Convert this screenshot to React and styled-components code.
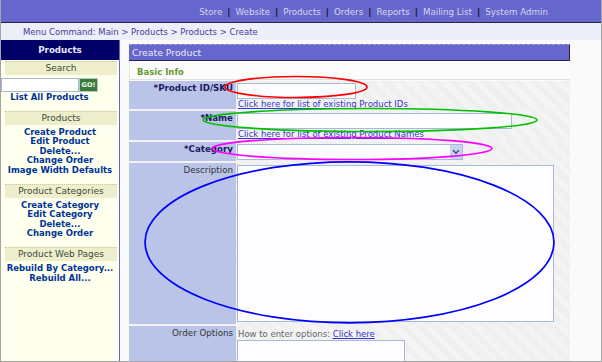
import React from 'react';
import styled, { createGlobalStyle } from 'styled-components';

const GlobalStyle = createGlobalStyle`
  html, body {
    margin: 0;
    padding: 0;
    background: #fafafa;
  }
  body {
    font-family: "DejaVu Sans", Verdana, sans-serif;
  }
`;

const navItems = ['Store', 'Website', 'Products', 'Orders', 'Reports', 'Mailing List', 'System Admin'];

const sections = [
  { title: 'Products', links: ['Create Product', 'Edit Product', 'Delete...', 'Change Order', 'Image Width Defaults'] },
  { title: 'Product Categories', links: ['Create Category', 'Edit Category', 'Delete...', 'Change Order'] },
  { title: 'Product Web Pages', links: ['Rebuild By Category...', 'Rebuild All...'] },
];

function App() {
  return (
    <Screen>
      <GlobalStyle />
      <Frame>
        <TopBar>
          {navItems.map((item, i) => (
            <React.Fragment key={item}>
              {i > 0 && <Sep>|</Sep>}
              <NavLink>{item}</NavLink>
            </React.Fragment>
          ))}
        </TopBar>
        <Crumbs>Menu Command: Main &gt; Products &gt; Products &gt; Create</Crumbs>
        <Body>
          <Sidebar>
            <SideTitle>Products</SideTitle>
            <SectionHead $first>Search</SectionHead>
            <SearchForm>
              <SearchRow>
                <SearchInput type="text" />
                <GoButton>GO!</GoButton>
              </SearchRow>
              <SideLink href="#">List All Products</SideLink>
            </SearchForm>
            {sections.map((s) => (
              <React.Fragment key={s.title}>
                <SectionHead>{s.title}</SectionHead>
                <LinkList>
                  {s.links.map((l, i) => (
                    <SideLink key={i} href="#">{l}</SideLink>
                  ))}
                </LinkList>
              </React.Fragment>
            ))}
          </Sidebar>
          <Main>
            <MainHead>Create Product</MainHead>
            <GroupRow>Basic Info</GroupRow>
            <FormGrid>
              <Label $req>*Product ID/SKU</Label>
              <Value>
                <TextInput $w={119} />
                <HelpLink href="#">Click here for list of existing Product IDs</HelpLink>
              </Value>
              <Label $req>*Name</Label>
              <Value>
                <TextInput $w={275} />
                <HelpLink href="#">Click here for list of existing Product Names</HelpLink>
              </Value>
              <Label $req>*Category</Label>
              <Value>
                <SelectBox>
                  <SelectArrow>
                    <svg width="8" height="6" viewBox="0 0 8 6">
                      <path d="M1 1.2 L4 4.2 L7 1.2" fill="none" stroke="#3e4f78" strokeWidth="1.6" />
                    </svg>
                  </SelectArrow>
                </SelectBox>
              </Value>
              <Label>Description</Label>
              <Value>
                <Area $w={317} $h={157} />
              </Value>
              <Label>Order Options</Label>
              <Value>
                <Hint>
                  How to enter options: <InlineLink href="#">Click here</InlineLink>
                </Hint>
                <Area $w={168} $h={40} />
              </Value>
            </FormGrid>
          </Main>
        </Body>
      </Frame>
      <Markup width="602" height="362" viewBox="0 0 602 362">
        <ellipse cx="296" cy="87" rx="71" ry="10.5" stroke="#ff0000" />
        <ellipse cx="370" cy="120" rx="167" ry="11.5" stroke="#00c000" />
        <ellipse cx="352" cy="148.5" rx="140" ry="11" stroke="#ff00ff" />
        <ellipse cx="349.5" cy="242.3" rx="204.5" ry="80.5" stroke="#0000ff" />
      </Markup>
    </Screen>
  );
}

export default App;

const Screen = styled.div`
  position: relative;
  width: 602px;
  height: 362px;
  overflow: hidden;
`;

const Frame = styled.div`
  width: 100%;
  height: 100%;
  box-sizing: border-box;
  border: 1px solid #a4a4a4;
  border-top: none;
  background: #fafafa;
  display: flex;
  flex-direction: column;
`;

const TopBar = styled.div`
  height: 22px;
  flex: none;
  background: #6666cc;
  border-bottom: 1px solid #26264a;
  display: flex;
  align-items: center;
  justify-content: flex-end;
  padding: 2px 53px 0 0;
  box-sizing: border-box;
  height: 23px;
  font-size: 8.7px;
  color: #d6d6f0;
`;

const NavLink = styled.span`
  white-space: nowrap;
`;

const Sep = styled.span`
  font-weight: bold;
  color: #10102a;
  padding: 0 5px;
`;

const Crumbs = styled.div`
  height: 17px;
  flex: none;
  box-sizing: border-box;
  background: #eceef8;
  padding: 2px 0 0 22px;
  font-size: 8.5px;
  line-height: 15px;
  color: #4a3c9c;
`;

const Body = styled.div`
  flex: 1;
  min-height: 0;
  display: flex;
  overflow: hidden;
`;

const Sidebar = styled.div`
  width: 118px;
  flex: none;
  background: #ffffee;
  border-right: 1px solid #6666cc;
  display: flex;
  flex-direction: column;
  & > * {
    flex: none;
  }
`;

const SideTitle = styled.div`
  height: 20px;
  background: #000066;
  color: #e8e8ff;
  font-weight: bold;
  font-size: 8.7px;
  line-height: 20px;
  text-align: center;
`;

const SectionHead = styled.div`
  margin: ${(p) => (p.$first ? '1px' : '8px')} 2px 0 4px;
  height: 14px;
  box-sizing: border-box;
  border-top: 1px dotted #c8c890;
  background: #eeeecc;
  color: #3b4b3b;
  font-size: 9px;
  line-height: 13px;
  text-align: center;
`;

const SearchForm = styled.div`
  width: 97px;
  margin-top: 3px;
  display: flex;
  flex-direction: column;
  text-align: center;
`;

const SearchRow = styled.div`
  display: flex;
  height: 14px;
  margin-bottom: 1px;
`;

const SearchInput = styled.input`
  width: 78px;
  height: 14px;
  box-sizing: border-box;
  border: 1px solid #a6b8d6;
  background: #fff;
  padding: 0;
  margin: 0;
  outline: none;
`;

const GoButton = styled.button`
  width: 19px;
  height: 14px;
  box-sizing: border-box;
  margin: 0;
  padding: 0;
  border: 1px solid #b4ccb4;
  background: #3d7a3d;
  color: #f4fff4;
  font-family: inherit;
  font-weight: bold;
  font-size: 6.5px;
  line-height: 12px;
`;

const LinkList = styled.div`
  margin-top: 3px;
  display: flex;
  flex-direction: column;
  text-align: center;
`;

const SideLink = styled.a`
  display: block;
  color: #003399;
  font-weight: bold;
  font-size: 8.5px;
  line-height: 9.6px;
  text-decoration: none;
  white-space: nowrap;
`;

const Main = styled.div`
  width: 441px;
  flex: none;
  margin-left: 9px;
  padding-top: 4px;
`;

const MainHead = styled.div`
  height: 17px;
  box-sizing: border-box;
  background: #6666cc;
  border-top: 1px dashed #a0a0e8;
  border-bottom: 1px solid #22224a;
  border-right: 1px solid #22224a;
  color: #eaeaff;
  font-size: 9.3px;
  line-height: 15px;
  padding-left: 3px;
`;

const GroupRow = styled.div`
  height: 19px;
  box-sizing: border-box;
  background: #fcfcfc;
  border-bottom: 1px solid #dedede;
  border-left: 1px solid #e6e6e6;
  padding: 0 0 1px 7px;
  display: flex;
  align-items: flex-end;
  color: #669933;
  font-weight: bold;
  font-size: 8.5px;
  line-height: 12px;
`;

const FormGrid = styled.div`
  display: grid;
  grid-template-columns: 107px 334px;
  grid-template-rows: 28px 29px 19px 161px 60px;
  row-gap: 2px;
  margin-top: 1px;
  background: #f2f2f4;
`;

const Label = styled.div`
  background: #bac4e8;
  text-align: right;
  padding: 1px 3px 0 0;
  font-size: 8.7px;
  line-height: 12px;
  color: ${(p) => (p.$req ? '#1a1a5c' : '#333333')};
  font-weight: ${(p) => (p.$req ? 'bold' : 'normal')};
  white-space: nowrap;
`;

const Value = styled.div`
  background: repeating-linear-gradient(45deg, #f8f8f8 0 1px, #ebebeb 1px 2px);
  padding: 2px 0 0 1px;
  display: flex;
  flex-direction: column;
  align-items: flex-start;
  & > * {
    flex: none;
  }
`;

const TextInput = styled.input`
  display: block;
  width: ${(p) => p.$w}px;
  height: 16px;
  box-sizing: border-box;
  border: 1px solid #a7b9d8;
  background: #fdfdff;
  padding: 0;
  margin: 0;
  outline: none;
`;

const HelpLink = styled.a`
  display: block;
  margin-left: 1px;
  font-size: 8.5px;
  line-height: 10px;
  color: #3535cc;
  text-decoration: underline;
  white-space: nowrap;
`;

const SelectBox = styled.div`
  width: 226px;
  height: 16px;
  box-sizing: border-box;
  border: 1px solid #a7b9d8;
  background: #fdfdff;
  display: flex;
  justify-content: flex-end;
  align-items: stretch;
`;

const SelectArrow = styled.span`
  width: 12px;
  background: #c5d4f0;
  display: flex;
  align-items: center;
  justify-content: center;
`;

const Area = styled.textarea`
  display: block;
  width: ${(p) => p.$w}px;
  height: ${(p) => p.$h}px;
  box-sizing: border-box;
  border: 1px solid #a7b9d8;
  background: #fdfdff;
  padding: 0;
  margin: 0;
  resize: none;
  outline: none;
`;

const Hint = styled.div`
  margin: 1px 0 1px 1px;
  font-size: 8.5px;
  line-height: 10px;
  color: #666666;
  white-space: nowrap;
`;

const InlineLink = styled.a`
  color: #3535cc;
  text-decoration: underline;
`;

const Markup = styled.svg`
  position: absolute;
  left: 0;
  top: 0;
  pointer-events: none;
  fill: none;
  stroke-width: 1.7;
`;
